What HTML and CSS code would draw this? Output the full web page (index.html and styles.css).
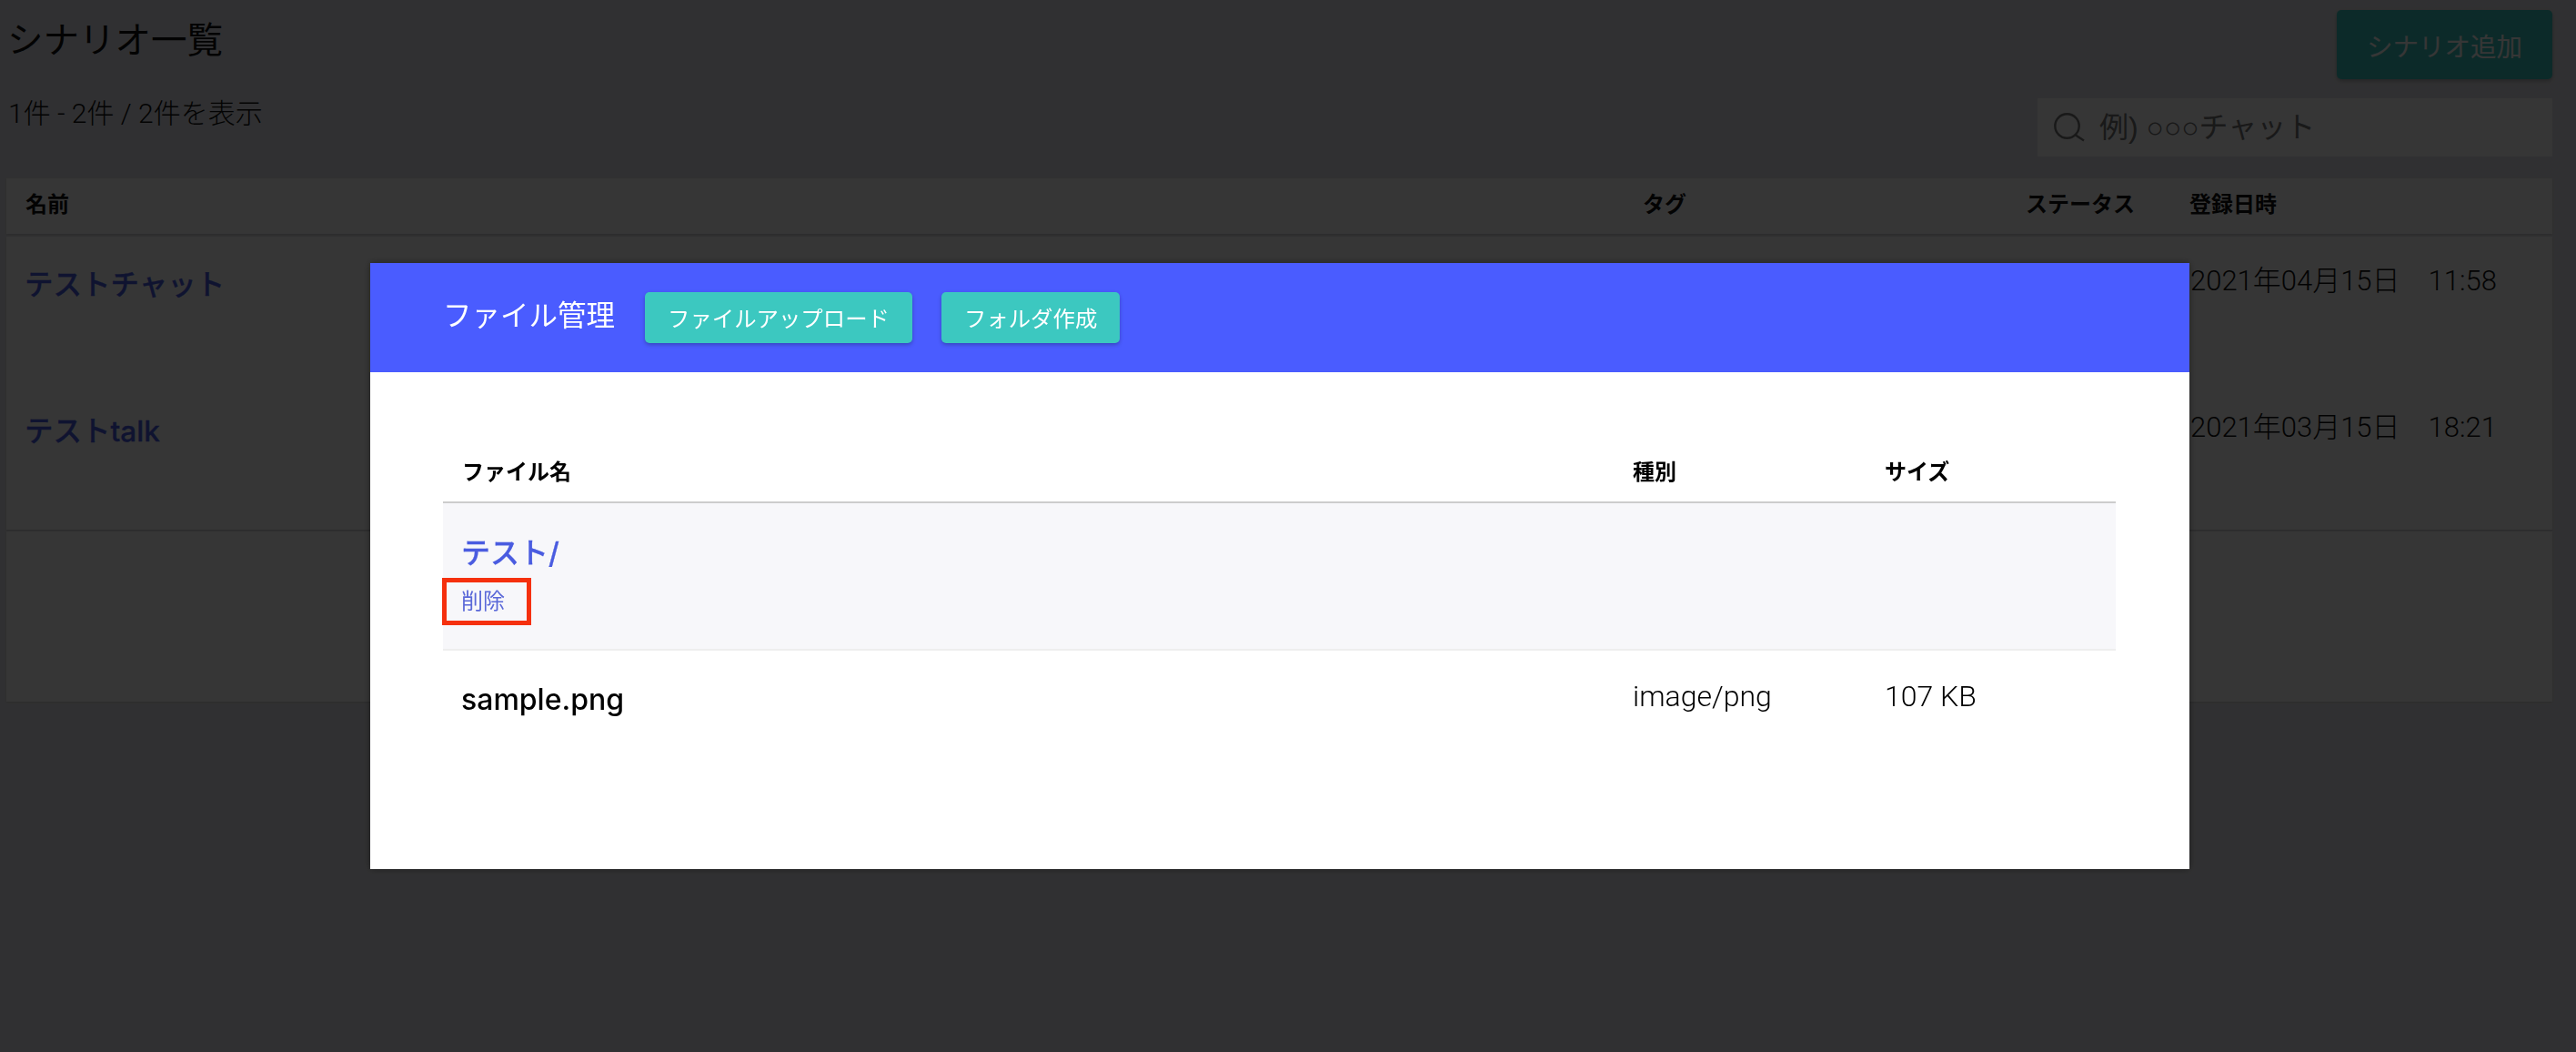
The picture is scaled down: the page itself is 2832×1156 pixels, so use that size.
FILE: index.html
```html
<!DOCTYPE html>
<html lang="ja">
<head>
<meta charset="utf-8">
<title>シナリオ一覧</title>
<link rel="stylesheet" href="styles.css">
</head>
<body>
<main class="page">
  <div class="topbar">
    <h1 class="title">シナリオ一覧</h1>
    <button class="btn btn-add">シナリオ追加</button>
  </div>
  <div class="toolbar">
    <p class="count">1件 - 2件 / 2件を表示</p>
    <label class="search">
      <svg class="search-icon" viewBox="0 0 36 32" fill="none" stroke="currentColor" stroke-width="2.4"><circle cx="15.5" cy="14.5" r="13.2"/><path d="M25 24.5l9 6"/></svg>
      <input class="search-input" type="text" placeholder="例) ○○○チャット">
    </label>
  </div>
  <div class="grid-head card">
    <span>名前</span><span>タグ</span><span>ステータス</span><span>登録日時</span>
  </div>
  <div class="rows card">
    <div class="grid-row">
      <a class="row-link">テストチャット</a><span></span><span></span><span class="date">2021年04月15日　11:58</span>
    </div>
    <div class="grid-row">
      <a class="row-link">テストtalk</a><span></span><span></span><span class="date">2021年03月15日　18:21</span>
    </div>
  </div>
  <div class="pager card"></div>
</main>

<div class="overlay">
  <section class="modal">
    <header class="modal-head">
      <h2 class="modal-title">ファイル管理</h2>
      <button class="btn btn-modal">ファイルアップロード</button>
      <button class="btn btn-modal">フォルダ作成</button>
    </header>
    <div class="modal-body">
      <div class="file-grid file-head">
        <span>ファイル名</span><span>種別</span><span>サイズ</span>
      </div>
      <div class="file-grid file-row file-row-hover">
        <div class="file-name">
          <a class="folder-link">テスト/</a>
          <a class="delete-link">削除</a>
        </div>
        <span></span><span></span>
      </div>
      <div class="file-grid file-row">
        <div class="file-plain">sample.png</div>
        <span class="file-meta">image/png</span>
        <span class="file-meta">107 KB</span>
      </div>
    </div>
  </section>
</div>
</body>
</html>
```

FILE: styles.css
```css
* { box-sizing: border-box; }
html, body { height: 100%; }
body {
  margin: 0;
  background: #e4e4e9;
  color: #111;
  font-family: "Liberation Sans", "Noto Sans CJK JP", sans-serif;
  overflow: hidden;
}
.page { padding: 11px 26px 0 7px; }
.topbar { display: flex; justify-content: space-between; height: 76px; }
.title { margin: 0; padding: 0 0 0 1px; font-size: 39.5px; font-weight: 400; line-height: 66px; }
.btn {
  border: 0;
  border-radius: 5px;
  background: #3cc8c0;
  color: #fff;
  font-family: inherit;
  box-shadow: 0 2px 4px rgba(0, 0, 0, .25);
}
.btn-add { width: 237px; height: 76px; font-size: 28.5px; }
.toolbar { display: flex; justify-content: space-between; margin-top: 21px; height: 64px; }
.count {
  margin: -3px 0 0;
  padding-left: 2px;
  font-family: Roboto, "Noto Sans CJK JP", sans-serif;
  font-size: 30px;
  font-weight: 300;
  line-height: 40px;
}
.search {
  display: flex;
  align-items: center;
  gap: 13px;
  width: 566px;
  padding-left: 17px;
  background: #fff;
  color: #757575;
}
.search-icon { width: 36px; height: 32px; flex: none; }
.search-input {
  flex: 1;
  min-width: 0;
  border: 0;
  background: transparent;
  font-family: "Liberation Sans", "Noto Sans CJK JP", sans-serif;
  font-size: 32px;
}
.search-input::placeholder { color: #757575; opacity: 1; }
.card { background: #fff; box-shadow: 0 1px 2px rgba(0, 0, 0, .12); }
.grid-head, .grid-row {
  display: grid;
  grid-template-columns: 1778px 421px 180px 1fr;
}
.grid-head {
  height: 61px;
  margin-top: 24px;
  padding-bottom: 8px;
  align-items: center;
  font-size: 24px;
  font-weight: 700;
}
.grid-head span { padding-left: 21px; }
.rows { margin-top: 3px; }
.grid-row { height: 161px; padding-top: 33px; align-items: start; }
.row-link {
  padding-left: 20px;
  color: #4a5ce0;
  font-family: Inter, "Noto Sans CJK JP", sans-serif;
  font-size: 31.5px;
  line-height: 40px;
  font-weight: 500;
  -webkit-text-stroke: .3px #4a5ce0;
}
.date {
  margin-top: -1px;
  padding-left: 22px;
  font-family: Roboto, "Noto Sans CJK JP", sans-serif;
  font-size: 31px;
  font-weight: 300;
  line-height: 34px;
  white-space: pre;
}
.pager { margin-top: 2px; height: 187px; }

.overlay {
  position: fixed;
  inset: 0;
  padding: 289px 0 0 407px;
  background: rgba(0, 0, 0, .79);
}
.modal {
  width: 2000px;
  height: 666px;
  background: #fff;
  box-shadow: 0 0 8px rgba(0, 0, 0, .4);
}
.modal-head {
  display: flex;
  align-items: center;
  height: 120px;
  padding: 0 0 0 80px;
  background: #4a5cff;
}
.modal-title { margin: 0 33px 10px 0; font-size: 31.5px; font-weight: 400; color: #fff; }
.btn-modal {
  height: 56px;
  padding: 0 25px 2px;
  margin-right: 32px;
  font-size: 24.4px;
}
.modal-body { padding: 81px 0 0 80px; width: 1919px; }
.file-grid {
  display: grid;
  grid-template-columns: 1287px 277px 275px;
}
.file-grid > * { padding-left: 21px; }
.file-head {
  height: 63px;
  border-bottom: 2px solid #ccc;
  padding-top: 9px;
  font-size: 24px;
  font-weight: 700;
  color: #000;
}
.file-row-hover {
  height: 162px;
  background: #f7f7fa;
  border-bottom: 2px solid #eee;
}
.file-name {
  padding: 33px 0 0 20px;
  display: flex;
  flex-direction: column;
  align-items: flex-start;
}
.folder-link {
  color: #4a5ce0;
  font-family: Inter, "Noto Sans CJK JP", sans-serif;
  font-size: 32px;
  line-height: 44px;
  font-weight: 500;
  -webkit-text-stroke: .3px #4a5ce0;
}
.delete-link {
  margin: 5px 0 0 -21px;
  width: 98px;
  height: 52px;
  padding-left: 16px;
  border: 5px solid #f5300e;
  color: #5a68d8;
  font-size: 24px;
  line-height: 42px;
}
.file-grid > .file-plain {
  padding: 31px 0 0 20px;
  font-family: Inter, "Liberation Sans", sans-serif;
  font-size: 32px;
  font-weight: 500;
  line-height: 46px;
  color: #000;
}
.file-meta {
  padding-top: 32px;
  font-family: Roboto, "Liberation Sans", sans-serif;
  font-size: 32px;
  font-weight: 300;
  line-height: 36px;
  color: #000;
}
```
